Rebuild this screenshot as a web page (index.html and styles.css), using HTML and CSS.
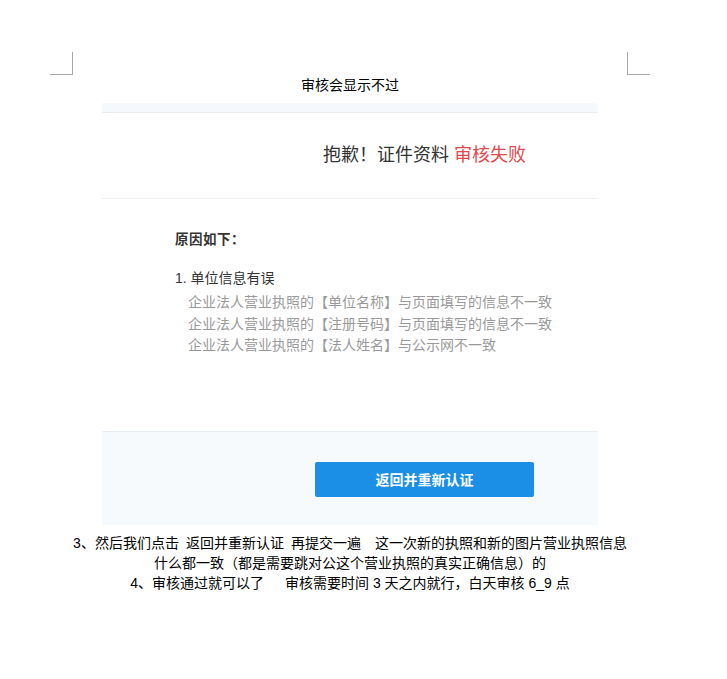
FILE: index.html
```html
<!DOCTYPE html>
<html lang="zh-CN">
<head>
<meta charset="utf-8">
<title>审核会显示不过</title>
<link rel="stylesheet" href="styles.css">
</head>
<body>
<div class="page">
  <div class="marks">
    <span class="mark mark-left"></span>
    <span class="mark mark-right"></span>
  </div>
  <div class="title">审核会显示不过</div>

  <div class="shot">
    <div class="shot-top"></div>
    <div class="shot-head">抱歉！证件资料 <span class="fail">审核失败</span></div>
    <div class="shot-body">
      <div class="reason-title">原因如下：</div>
      <div class="reason-item">1. 单位信息有误</div>
      <ul class="reason-list">
        <li>企业法人营业执照的【单位名称】与页面填写的信息不一致</li>
        <li>企业法人营业执照的【注册号码】与页面填写的信息不一致</li>
        <li>企业法人营业执照的【法人姓名】与公示网不一致</li>
      </ul>
    </div>
    <div class="shot-foot">
      <button class="btn">返回并重新认证</button>
    </div>
  </div>

  <div class="notes">
    <p>3、然后我们点击&ensp;返回并重新认证&ensp;再提交一遍&ensp;&ensp;这一次新的执照和新的图片营业执照信息</p>
    <p>什么都一致（都是需要跳对公这个营业执照的真实正确信息）的</p>
    <p>4、审核通过就可以了&ensp;&ensp;&ensp;审核需要时间 3 天之内就行，白天审核 6_9 点</p>
  </div>
</div>
</body>
</html>
```

FILE: styles.css
```css
* { box-sizing: border-box; }

body {
  margin: 0;
  background: #ffffff;
  font-family: "Liberation Sans", "Noto Sans CJK SC", sans-serif;
  color: #000;
}

.page {
  width: 727px;
  padding-top: 52px;
}

.marks {
  display: flex;
  justify-content: space-between;
  padding: 0 77px 0 50px;
  height: 23px;
}

.mark {
  width: 23px;
  height: 23px;
  border-bottom: 1px solid #a8a8a8;
}

.mark-left { border-right: 1px solid #a8a8a8; }
.mark-right { border-left: 1px solid #a8a8a8; }

.title {
  text-align: center;
  font-size: 14px;
  line-height: 20px;
  height: 20px;
  padding: 0 100px 0 73px;
}

.shot {
  margin: 8px 129px 0 102px;
  background: #fff;
}

.shot-top {
  height: 10px;
  background: #f5f8fd;
  border-bottom: 1px solid #e9edf2;
}

.shot-head {
  padding: 30px 0 31px 221px;
  font-size: 18px;
  line-height: 24px;
  color: #333;
  border-bottom: 1px solid #eef0f3;
  white-space: nowrap;
}

.fail { color: #e0494d; }

.shot-body {
  padding: 31px 0 74px 73px;
  color: #333;
}

.reason-title {
  font-size: 13.5px;
  font-weight: bold;
  line-height: 20px;
  letter-spacing: 0.5px;
}

.reason-item {
  margin-top: 18px;
  font-size: 14px;
  line-height: 20px;
}

.reason-list {
  list-style: none;
  margin: 4px 0 0;
  padding: 0 0 0 13px;
  color: #9a9a9a;
  font-size: 14px;
  line-height: 21.5px;
  white-space: nowrap;
}

.shot-foot {
  border-top: 1px solid #e9eef4;
  background: #f7fafd;
  padding: 30px 0 28px 213px;
}

.btn {
  display: block;
  width: 219px;
  height: 35px;
  border: none;
  border-radius: 2px;
  background: #1a8fe5;
  color: #fff;
  font-family: "Liberation Sans", "Noto Sans CJK SC", sans-serif;
  font-size: 14px;
  font-weight: bold;
  padding: 0;
}

.notes {
  margin-top: 8px;
  padding: 0 100px 0 73px;
  text-align: center;
  font-size: 14px;
  line-height: 20px;
}

.notes p {
  margin: 0;
  white-space: nowrap;
}
```
